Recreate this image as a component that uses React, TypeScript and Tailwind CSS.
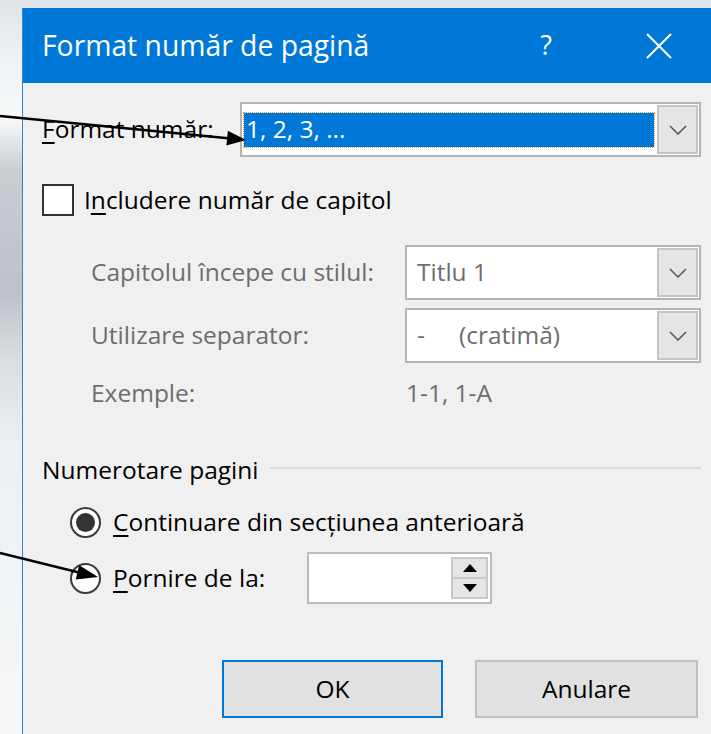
import type { ReactNode } from "react";

const font = { fontFamily: '"Open Sans", "Noto Sans", Arial, sans-serif' };

function Chevron() {
  return (
    <svg width="18" height="10" viewBox="0 0 18 10">
      <polyline points="1,1 9,9 17,1" fill="none" stroke="#5a5a5a" strokeWidth="1.6" />
    </svg>
  );
}

function ComboBox({ children, width }: { children: ReactNode; width: string }) {
  return (
    <div className={`flex h-[55px] border-2 border-[#b4b4b4] bg-white ${width}`}>
      <div className="flex flex-1 items-center min-w-0">{children}</div>
      <div className="m-[1px] flex w-[41px] items-center justify-center border-2 border-[#c4c4c4] bg-[#e5e5e5]">
        <Chevron />
      </div>
    </div>
  );
}

function Radio({ checked }: { checked?: boolean }) {
  return (
    <span className="flex h-[31px] w-[31px] shrink-0 items-center justify-center rounded-full border-2 border-[#3a3a3a] bg-white">
      {checked && <span className="h-[19px] w-[19px] rounded-full bg-[#333333]" />}
    </span>
  );
}

function Pointer() {
  // annotation arrows drawn over the dialog
  return (
    <svg className="pointer-events-none absolute inset-0" width="711" height="734">
      <line x1="0" y1="116" x2="228" y2="138.3" stroke="#000" strokeWidth="2.6" />
      <polygon points="246,140 226.4,145.4 227.9,130.8" fill="#000" />
      <line x1="0" y1="553" x2="79" y2="572.5" stroke="#000" strokeWidth="2.6" />
      <polygon points="98,577 75.7,579.6 79.2,565.2" fill="#000" />
    </svg>
  );
}

export default function App() {
  return (
    <div
      className="relative flex h-[734px] w-[711px] overflow-hidden bg-[linear-gradient(180deg,#dfe4e8_0px,#eef2f5_60px,#f7f9fa_120px,#c9ced3_170px,#bcc2c8_290px,#d9dde1_360px,#eceff2_440px,#f6f8f9_734px)] pl-[22px] pt-[8px] text-[24.5px] text-black"
      style={font}
    >
      <div className="flex flex-1 flex-col border-l border-[#2b88d8] bg-[#f0f0f0]">
        <div className="flex h-[75px] items-center bg-[#0078d7] pl-[19px] pr-[39px] text-white">
          <span className="flex-1 text-[28.3px]">Format număr de pagină</span>
          <span className="mr-[94px] text-[27px]">?</span>
          <svg width="26" height="26" viewBox="0 0 26 26">
            <path d="M1 1 L25 25 M25 1 L1 25" stroke="#fff" strokeWidth="2" />
          </svg>
        </div>

        <div className="flex flex-col pl-[19px] pr-[10px] pt-[19px]">
          <div className="flex h-[55px] items-center">
            <span className="w-[198px]">
              <span className="underline underline-offset-4">F</span>ormat număr:
            </span>
            <ComboBox width="flex-1">
              <div className="mx-[2px] flex h-[34px] flex-1 items-center bg-[#0078d7] pl-[2px] text-white outline-1 outline-dotted outline-[#e89a3c]">
                1, 2, 3, ...
              </div>
            </ComboBox>
          </div>

          <label className="mt-[27px] flex h-[32px] items-center gap-[10px]">
            <span className="h-[32px] w-[32px] border-2 border-[#333333] bg-white" />
            <span>
              I<span className="underline underline-offset-4">n</span>cludere număr de capitol
            </span>
          </label>

          <div className="mt-[29px] flex h-[55px] items-center pl-[49px] text-[#6d6d6d]">
            <span className="w-[314px]">Capitolul începe cu stilul:</span>
            <ComboBox width="flex-1">
              <span className="pl-[10px]">Titlu 1</span>
            </ComboBox>
          </div>

          <div className="mt-[8px] flex h-[55px] items-center pl-[49px] text-[#6d6d6d]">
            <span className="w-[314px]">Utilizare separator:</span>
            <ComboBox width="flex-1">
              <span className="w-[52px] pl-[10px]">-</span>
              <span>(cratimă)</span>
            </ComboBox>
          </div>

          <div className="mt-[15px] flex h-[30px] items-center pl-[49px] text-[#6d6d6d]">
            <span className="w-[315px]">Exemple:</span>
            <span>1-1, 1-A</span>
          </div>

          <div className="mt-[47px] flex h-[30px] items-center">
            <span>Numerotare pagini</span>
            <span className="ml-[12px] mt-[-4px] h-[2px] flex-1 bg-[#dcdcdc]" />
          </div>

          <div className="mt-[19px] flex h-[36px] items-center gap-[12px] pl-[28px]">
            <Radio checked />
            <span>
              <span className="underline underline-offset-4">C</span>ontinuare din secțiunea anterioară
            </span>
          </div>

          <div className="mt-[12px] flex h-[52px] items-center pl-[28px]">
            <Radio />
            <span className="ml-[12px] w-[194px]">
              <span className="underline underline-offset-4">P</span>ornire de la:
            </span>
            <div className="flex h-[52px] w-[185px] justify-end border-2 border-[#bcbcbc] bg-white py-[3px] pr-[2px]">
              <div className="flex w-[37px] flex-col">
                <span className="flex flex-1 items-center justify-center border-2 border-[#c8c8c8] bg-[#e5e5e5]">
                  <svg width="14" height="8" viewBox="0 0 14 8">
                    <polygon points="7,0 14,8 0,8" fill="#000" />
                  </svg>
                </span>
                <span className="flex flex-1 items-center justify-center border-2 border-t-0 border-[#c8c8c8] bg-[#e5e5e5]">
                  <svg width="14" height="8" viewBox="0 0 14 8">
                    <polygon points="0,0 14,0 7,8" fill="#000" />
                  </svg>
                </span>
              </div>
            </div>
          </div>

          <div className="mt-[56px] flex justify-end gap-[32px] pr-[3px]">
            <button className="h-[58px] w-[221px] border-2 border-[#0078d7] bg-[#e1e1e1]">OK</button>
            <button className="h-[58px] w-[223px] border-2 border-[#c0c0c0] bg-[#e1e1e1]">Anulare</button>
          </div>
        </div>
      </div>
      <Pointer />
    </div>
  );
}
